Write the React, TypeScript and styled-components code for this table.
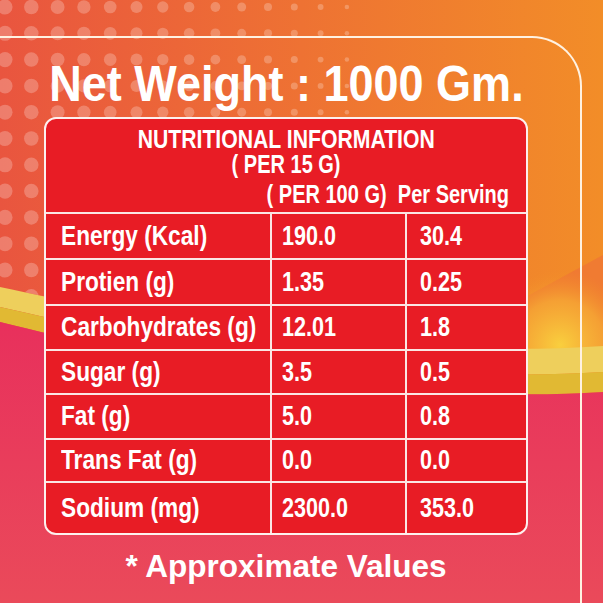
import React from "react";
import styled, { createGlobalStyle } from "styled-components";

const FONT = `"Liberation Sans", Arial, sans-serif`;

const GlobalStyle = createGlobalStyle`
  html, body { margin: 0; padding: 0; }
  body { width: 603px; height: 603px; overflow: hidden; background: #e94a5a; }
`;

const Page = styled.div`
  width: 603px;
  height: 603px;
  overflow: hidden;
  display: grid;
  grid-template: 603px / 603px;
  & > * { grid-area: 1 / 1; }
`;

const Backdrop = styled.svg`
  display: block;
  width: 603px;
  height: 603px;
`;

const Frame = styled.section`
  box-sizing: border-box;
  margin-top: 36px;
  width: 582px;
  height: 567px;
  border-top: 2px solid #fff2e2;
  border-right: 2px solid #fff2e2;
  border-top-right-radius: 50px;
  padding: 0 52px 0 44px;
  display: flex;
  flex-direction: column;
  font-family: ${FONT};
  font-weight: 700;
  color: #ffffff;
`;

/* condensed lettering: the artwork's type is narrower than any installed face */
const Squeeze = styled.span<{ $sx: number; $origin?: string }>`
  display: inline-block;
  white-space: pre;
  transform: scaleX(${(p) => p.$sx});
  transform-origin: ${(p) => p.$origin ?? "left"} center;
`;

const Title = styled.h1`
  margin: 21px 0 0;
  display: flex;
  justify-content: center;
  font-size: 50px;
  line-height: 50px;
  font-weight: 700;
  white-space: nowrap;
`;

const Table = styled.div`
  margin-top: 8px;
  border: 2px solid #fdf0ee;
  border-radius: 12px;
  background: #e81c25;
  overflow: hidden;
  display: grid;
  grid-template-columns: 224px 135px 1fr;
`;

const Header = styled.div`
  grid-column: 1 / -1;
  padding: 8px 0 5px;
  display: flex;
  flex-direction: column;
`;

const HeadLine = styled.div`
  display: flex;
  justify-content: center;
  font-size: 25px;
  line-height: 25px;
  white-space: nowrap;
`;

const ColumnHeads = styled.div`
  margin-top: 5px;
  display: flex;
  justify-content: flex-end;
  padding-right: 17px;
  font-size: 25px;
  line-height: 25px;
  white-space: nowrap;
`;

const HeadGap = styled.span`
  display: inline-block;
  width: 14px;
`;

const Cell = styled.div<{ $h: number; $col: number }>`
  box-sizing: border-box;
  height: ${(p) => p.$h}px;
  border-top: 2px solid #fbe6e4;
  border-left: ${(p) => (p.$col === 0 ? "none" : "2px solid #fbe6e4")};
  padding-left: ${(p) => (p.$col === 0 ? 15 : p.$col === 1 ? 10 : 13)}px;
  display: flex;
  align-items: center;
  font-size: 27px;
  line-height: 27px;
  white-space: nowrap;
`;

const Note = styled.p`
  margin: 15px 0 0;
  display: flex;
  justify-content: center;
  font-size: 32px;
  line-height: 32px;
  white-space: nowrap;
`;

const rows: { label: string; per100: string; serving: string; h: number }[] = [
  { label: "Energy (Kcal)", per100: "190.0", serving: "30.4", h: 46 },
  { label: "Protien (g)", per100: "1.35", serving: "0.25", h: 46 },
  { label: "Carbohydrates (g)", per100: "12.01", serving: "1.8", h: 45 },
  { label: "Sugar (g)", per100: "3.5", serving: "0.5", h: 44 },
  { label: "Fat (g)", per100: "5.0", serving: "0.8", h: 45 },
  { label: "Trans Fat (g)", per100: "0.0", serving: "0.0", h: 43 },
  { label: "Sodium (mg)", per100: "2300.0", serving: "353.0", h: 52 },
];

function Dots() {
  const out: React.ReactElement[] = [];
  const step = 26.3;
  for (let i = 0; i < 12; i++) {
    const y = 7 + i * step;
    for (let j = 0; j < 16; j++) {
      const x = 5 + j * step;
      const t = 1 - x / 390;
      if (t <= 0) continue;
      const r = 7.6 * Math.pow(t, 0.55);
      if (r < 1.6) continue;
      out.push(<circle key={`${i}-${j}`} cx={x} cy={y} r={r} />);
    }
  }
  return (
    <g fill="#ffffff" fillOpacity={0.24} clipPath="url(#aboveBand)">
      {out}
    </g>
  );
}

function Background() {
  return (
    <Backdrop viewBox="0 0 603 603" aria-hidden="true">
      <defs>
        <linearGradient id="sky" x1="0" y1="0" x2="1" y2="0">
          <stop offset="0" stopColor="#e9553f" />
          <stop offset="0.5" stopColor="#ee7233" />
          <stop offset="1" stopColor="#f28d28" />
        </linearGradient>
        <linearGradient id="pink" x1="0" y1="0" x2="0" y2="1">
          <stop offset="0" stopColor="#e8305c" />
          <stop offset="1" stopColor="#ea4a5a" />
        </linearGradient>
        <radialGradient id="glow" cx="560" cy="345" r="75" gradientUnits="userSpaceOnUse">
          <stop offset="0" stopColor="#f9cf3e" />
          <stop offset="0.6" stopColor="#f6a934" stopOpacity="0.8" />
          <stop offset="1" stopColor="#f28d28" stopOpacity="0" />
        </radialGradient>
        <clipPath id="aboveBand">
          <path d="M0,0 H603 V346 C400,360 150,320 0,287 Z" />
        </clipPath>
      </defs>
      <rect width="603" height="603" fill="url(#sky)" />
      <path d="M520,300 L603,255 L603,350 L520,352 Z" fill="#ef7436" opacity="0.7" />
      <rect x="480" y="270" width="123" height="90" fill="url(#glow)" />
      <Dots />
      <path d="M0,287 C150,320 400,360 603,346 L603,372 C400,385 150,342 0,307 Z" fill="#eecf5c" />
      <path d="M0,307 C150,342 400,385 603,372 L603,392 C400,405 150,360 0,322 Z" fill="#e1b933" />
      <path d="M0,322 C150,360 400,405 603,392 L603,603 L0,603 Z" fill="url(#pink)" />
    </Backdrop>
  );
}

export default function App() {
  return (
    <>
      <GlobalStyle />
      <Page>
        <Background />
        <Frame>
          <Title>
            <Squeeze $sx={0.9} $origin="center">Net Weight : 1000 Gm.</Squeeze>
          </Title>
          <Table>
            <Header>
              <HeadLine>
                <Squeeze $sx={0.848} $origin="center">NUTRITIONAL INFORMATION</Squeeze>
              </HeadLine>
              <HeadLine>
                <Squeeze $sx={0.8} $origin="center">( PER 15 G)</Squeeze>
              </HeadLine>
              <ColumnHeads>
                <Squeeze $sx={0.8} $origin="right">
                  <span>( PER 100 G)</span>
                  <HeadGap />
                  <span>Per Serving</span>
                </Squeeze>
              </ColumnHeads>
            </Header>
            {rows.map((r) => (
              <React.Fragment key={r.label}>
                <Cell $h={r.h} $col={0}>
                  <Squeeze $sx={0.84}>{r.label}</Squeeze>
                </Cell>
                <Cell $h={r.h} $col={1}>
                  <Squeeze $sx={0.8}>{r.per100}</Squeeze>
                </Cell>
                <Cell $h={r.h} $col={2}>
                  <Squeeze $sx={0.8}>{r.serving}</Squeeze>
                </Cell>
              </React.Fragment>
            ))}
          </Table>
          <Note>
            <Squeeze $sx={0.985} $origin="center">* Approximate Values</Squeeze>
          </Note>
        </Frame>
      </Page>
    </>
  );
}
